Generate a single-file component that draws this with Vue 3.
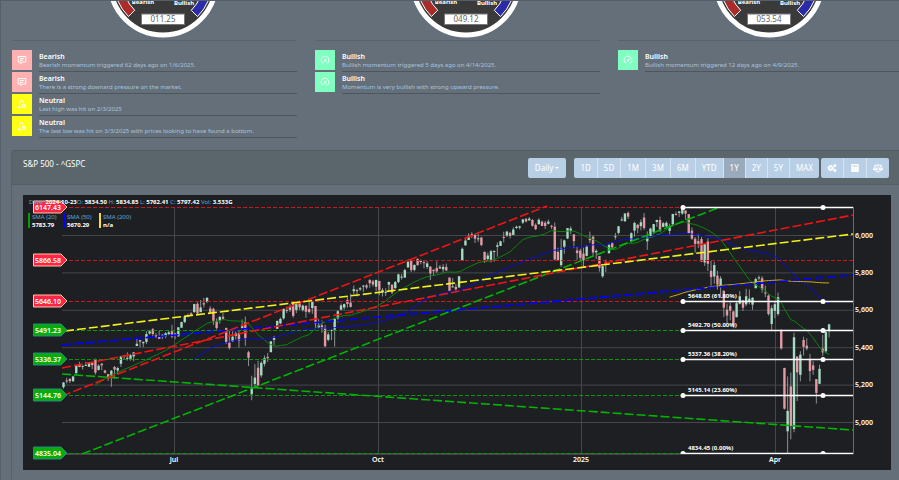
<script setup>
import { ref, computed } from 'vue';

const gauges = ref([
    {
        id: 1,
        valor: "011.25",
        signals: [
            { id: 1, tipo: "bearish", titulo: "Bearish", texto: "Bearish momentum triggered 62 days ago on 1/6/2025." },
            { id: 2, tipo: "bearish", titulo: "Bearish", texto: "There is a strong downard pressure on the market." },
            { id: 3, tipo: "neutral", titulo: "Neutral", texto: "Last high was hit on 2/3/2025" },
            { id: 4, tipo: "neutral", titulo: "Neutral", texto: "The last low was hit on 3/3/2025 with prices looking to have found a bottom." }
        ]
    },
    {
        id: 2,
        valor: "049.12",
        signals: [
            { id: 1, tipo: "bullish", titulo: "Bullish", texto: "Bullish momentum triggered 5 days ago on 4/14/2025." },
            { id: 2, tipo: "bullish", titulo: "Bullish", texto: "Momentum is very bullish with strong upward pressure." }
        ]
    },
    {
        id: 3,
        valor: "053.54",
        signals: [
            { id: 1, tipo: "bullish", titulo: "Bullish", texto: "Bullish momentum triggered 12 days ago on 4/9/2025." }
        ]
    }
]);

const ranges = ["1D", "5D", "1M", "3M", "6M", "YTD", "1Y", "2Y", "5Y", "MAX"];
const activeRange = ref("1Y");

// closes before the first visible bar, needed by the averages
const previous = [5100, 5116, 5036, 5018, 5064, 5128, 5181, 5188, 5188];

// open, high, low, close
const bars = [
    [5189,5216,5180,5214],[5225,5239,5209,5222],[5233,5237,5211,5221],[5221,5250,5217,5246],[5263,5311,5263,5308],
    [5310,5325,5296,5297],[5303,5305,5283,5303],[5305,5325,5302,5308],[5298,5324,5297,5321],[5319,5323,5286,5307],
    [5340,5341,5256,5267],[5281,5311,5278,5304],[5315,5315,5280,5306],[5278,5282,5262,5266],[5259,5260,5222,5235],
    [5243,5280,5191,5277],[5297,5302,5234,5283],[5278,5298,5257,5291],[5314,5354,5297,5354],[5357,5362,5335,5352],
    [5343,5375,5331,5346],[5341,5365,5331,5360],[5353,5375,5327,5375],[5409,5447,5409,5421],[5441,5441,5402,5433],
    [5424,5432,5403,5431],[5431,5488,5420,5473],[5476,5490,5471,5487],[5499,5505,5455,5473],[5466,5478,5452,5464],
    [5459,5490,5447,5447],[5460,5472,5446,5469],[5460,5483,5451,5477],[5473,5490,5467,5482],[5488,5523,5451,5460],
    [5471,5479,5446,5475],[5461,5509,5458,5509],[5507,5539,5507,5537],[5537,5570,5531,5567],[5572,5583,5562,5572],
    [5584,5590,5574,5576],[5591,5635,5586,5633],[5635,5642,5576,5584],[5590,5655,5590,5615],[5638,5666,5614,5631],
    [5644,5669,5639,5667],[5610,5622,5584,5588],[5608,5614,5522,5544],[5543,5557,5497,5505],[5544,5570,5529,5564],
    [5565,5585,5550,5555],[5505,5508,5419,5427],[5428,5491,5390,5399],[5433,5488,5430,5459],[5476,5487,5444,5463],
    [5478,5489,5401,5436],[5505,5551,5493,5522],[5537,5566,5410,5446],[5376,5383,5302,5346],[5151,5250,5119,5186],
    [5206,5312,5193,5240],[5293,5330,5195,5199],[5252,5328,5240,5319],[5314,5358,5300,5344],[5351,5371,5324,5344],
    [5376,5436,5376,5434],[5442,5463,5415,5455],[5501,5546,5501,5543],[5530,5561,5525,5554],[5557,5608,5550,5608],
    [5602,5620,5585,5597],[5603,5632,5591,5620],[5637,5643,5560,5570],[5602,5641,5585,5634],[5639,5651,5602,5616],
    [5602,5631,5593,5625],[5624,5627,5560,5592],[5607,5646,5583,5591],[5612,5651,5581,5648],[5623,5623,5504,5528],
    [5506,5552,5503,5520],[5520,5546,5480,5503],[5507,5522,5402,5408],[5442,5484,5434,5471],[5490,5497,5441,5495],
    [5496,5560,5406,5554],[5557,5600,5535,5595],[5603,5636,5601,5626],[5615,5636,5604,5633],[5655,5670,5614,5634],
    [5641,5689,5615,5618],[5702,5733,5686,5713],[5709,5715,5674,5702],[5711,5725,5704,5718],[5727,5735,5698,5732],
    [5733,5741,5712,5722],[5762,5767,5721,5745],[5755,5763,5727,5738],[5726,5765,5703,5762],[5757,5757,5681,5708],
    [5698,5719,5674,5709],[5698,5718,5677,5699],[5737,5753,5702,5751],[5737,5739,5686,5695],[5719,5757,5714,5751],
    [5751,5796,5745,5792],[5778,5795,5764,5780],[5775,5822,5775,5815],[5829,5871,5829,5859],[5866,5870,5804,5815],
    [5816,5846,5808,5842],[5875,5878,5840,5841],[5859,5872,5846,5864],[5857,5866,5824,5853],[5832,5863,5821,5851],
    [5834,5834,5762,5797],[5817,5817,5784,5809],[5826,5862,5799,5808],[5833,5842,5823,5823],[5819,5847,5802,5832],
    [5832,5850,5811,5813],[5775,5775,5702,5705],[5723,5772,5723,5728],[5725,5741,5696,5712],[5722,5783,5722,5782],
    [5864,5936,5864,5929],[5947,5983,5947,5973],[5976,6012,5976,5995],[6008,6017,5986,6001],[6003,6009,5960,5983],
    [5985,6008,5965,5985],[5989,5993,5942,5949],[5912,5915,5853,5870],[5874,5908,5865,5893],[5870,5923,5855,5916],
    [5914,5920,5860,5917],[5940,5963,5887,5948],[5944,5972,5944,5969],[5992,6020,5963,5987],[6000,6025,5992,6021],
    [6014,6020,5984,5998],[6003,6044,6003,6032],[6040,6053,6035,6047],[6042,6052,6033,6049],[6069,6089,6061,6086],
    [6089,6094,6070,6075],[6081,6099,6079,6090],[6083,6088,6048,6052],[6057,6065,6029,6034],[6060,6092,6060,6084],
    [6074,6079,6051,6051],[6068,6078,6035,6051],[6063,6085,6059,6074],[6052,6057,6035,6050],[6047,6070,5867,5872],
    [5912,5935,5866,5867],[5842,5982,5832,5930],[5940,5978,5902,5974],[5984,6040,5981,6040],[6024,6049,6007,6037],
    [6006,6006,5932,5970],[5920,5940,5869,5906],[5919,5929,5868,5881],[5903,5935,5829,5868],[5891,5949,5888,5942],
    [5982,6021,5960,5975],[5993,6000,5890,5909],[5910,5927,5874,5918],[5890,5890,5807,5827],[5782,5838,5773,5836],
    [5859,5871,5805,5842],[5905,5960,5905,5949],[5963,5964,5930,5937],[5995,6014,5978,5996],[6014,6051,6006,6049],
    [6081,6100,6076,6086],[6076,6118,6074,6118],[6121,6128,6088,6101],[5969,6017,5962,6012],[6026,6074,5994,6067],
    [6057,6062,6012,6039],[6050,6086,6027,6071],[6096,6120,6030,6040],[5969,6022,5923,5994],[5998,6042,5990,6037],
    [6020,6062,6007,6061],[6072,6084,6046,6083],[6083,6101,6019,6025],[6046,6073,6044,6066],[6049,6076,6042,6068],
    [6025,6063,6003,6051],[6060,6116,6050,6115],[6115,6127,6107,6114],[6121,6129,6099,6129],[6117,6147,6111,6144],
    [6134,6134,6084,6117],[6114,6114,6008,6013],[6026,6043,5977,5983],[5982,5992,5908,5955],[5970,6009,5932,5956],
    [5981,5993,5858,5861],[5856,5959,5837,5954],[5968,5986,5810,5849],[5811,5865,5732,5778],[5781,5860,5742,5842],
    [5785,5812,5711,5738],[5726,5783,5666,5770],[5705,5705,5564,5614],[5603,5636,5528,5572],[5624,5642,5546,5599],
    [5594,5597,5504,5521],[5563,5645,5563,5638],[5635,5703,5631,5675],[5654,5654,5597,5614],[5632,5715,5622,5675],
    [5646,5711,5632,5662],[5630,5670,5603,5667],[5718,5775,5718,5767],[5775,5786,5760,5776],[5771,5783,5694,5712],
    [5695,5732,5670,5693],[5679,5685,5572,5580],[5527,5627,5488,5611],[5597,5650,5558,5633],[5580,5695,5571,5670],
    [5492,5499,5390,5396],[5292,5292,5069,5074],[4953,5246,4835,5062],[5193,5267,4910,4982],[4965,5481,4948,5456],
    [5353,5353,5115,5268],[5255,5381,5220,5363],[5441,5459,5358,5405],[5411,5450,5386,5396],[5335,5367,5220,5275],
    [5305,5328,5255,5282],[5232,5232,5101,5158],[5207,5309,5207,5287],[5395,5469,5356,5375],[5381,5489,5371,5484],
    [5489,5528,5455,5525]
];

const xAt = (i) => 40.5 + i * 3.19;
const yAt = (price) => 40.5 + (6000 - price) * 0.187;

const candles = bars.map(([open, high, low, close], i) => ({
    id: i,
    x: xAt(i),
    high: yAt(high),
    low: yAt(low),
    top: yAt(Math.max(open, close)),
    height: Math.max(Math.abs(open - close) * 0.187, 1),
    up: close >= open
}));

const sma = (size) => {
    const closes = [...previous, ...bars.map((bar) => bar[3])];
    const points = [];
    for (let i = size - 1; i < closes.length; i++) {
        const sum = closes.slice(i - size + 1, i + 1).reduce((a, b) => a + b, 0);
        points.push(`${xAt(i - previous.length).toFixed(1)},${yAt(sum / size).toFixed(1)}`);
    }
    return points.join(" ");
};

const averages = computed(() => [
    { id: 20, nombre: "SMA (20)", valor: "5783.79", color: "#0a9a0a", line: "#0a860a", points: sma(20), x: 5 },
    { id: 50, nombre: "SMA (50)", valor: "5670.29", color: "#0000ff", line: "#0c0cd8", points: sma(50), x: 40 },
    { id: 200, nombre: "SMA (200)", valor: "n/a", color: "#f5e02a", line: "#d0a810", points: sma(200), x: 76 }
]);

const gridPrices = [6000, 5800, 5600, 5400, 5200, 5000];
const months = [
    { x: 151, label: "Jul" },
    { x: 355, label: "Oct" },
    { x: 558, label: "2025" },
    { x: 752, label: "Apr" }
];

const levels = [
    { price: "6147.43", y: 12, tipo: "resistance" },
    { price: "5866.58", y: 65, tipo: "resistance" },
    { price: "5646.10", y: 106, tipo: "resistance" },
    { price: "5491.23", y: 135, tipo: "support" },
    { price: "5336.37", y: 164, tipo: "support" },
    { price: "5144.76", y: 200, tipo: "support" },
    { price: "4835.04", y: 258, tipo: "support" }
];

const fibs = [
    { y: 12, label: "" },
    { y: 106, label: "5648.05 (61.80%)" },
    { y: 135, label: "5492.70 (50.00%)" },
    { y: 164, label: "5337.36 (38.20%)" },
    { y: 200, label: "5145.14 (23.60%)" },
    { y: 258, label: "4834.45 (0.00%)" }
];

const trends = [
    { color: "#0000ff", x1: 39, y1: 150, x2: 830, y2: 80 },
    { color: "#00b400", x1: 39, y1: 179, x2: 830, y2: 235 },
    { color: "#00b400", x1: 59, y1: 259, x2: 697, y2: 12 },
    { color: "#f01414", x1: 39, y1: 201, x2: 524, y2: 11 },
    { color: "#f01414", x1: 39, y1: 173, x2: 830, y2: 20 },
    { color: "#f5f514", x1: 42, y1: 136, x2: 830, y2: 39 }
];
</script>

<template>
    <main class="dashboard">
        <section class="overview">
            <article v-for="gauge in gauges" :key="gauge.id" class="column">
                <div class="gauge">
                    <svg width="112" height="38" viewBox="-56 19 112 38" role="img" :aria-label="'Momentum ' + gauge.valor">
                        <circle r="53" fill="#3a3a3b" stroke="#fff" stroke-width="5" />
                        <path d="M-34.5 34.5 A48.8 48.8 0 0 1 -48.8 0 L-40 0 A40 40 0 0 0 -28.3 28.3 Z" fill="#ab2a2a" stroke="#fff" stroke-width="1" />
                        <path d="M34.5 34.5 A48.8 48.8 0 0 0 48.8 0 L40 0 A40 40 0 0 1 28.3 28.3 Z" fill="#2b2baa" stroke="#fff" stroke-width="1" />
                        <text class="gauge-label" x="-20" y="22">Bearish</text>
                        <text class="gauge-label" x="21" y="23">Bullish</text>
                        <rect x="-21.5" y="32" width="43" height="10.5" fill="#fff" stroke="#777" />
                        <text class="gauge-value" x="0" y="40">{{ gauge.valor }}</text>
                    </svg>
                </div>
                <ul class="signals">
                    <li v-for="signal in gauge.signals" :key="signal.id" class="signal">
                        <span class="signal-icon" :class="signal.tipo">
                            <svg v-if="signal.tipo === 'bearish'" width="10" height="10" viewBox="0 0 10 10">
                                <path d="M1.2 1.5 H8.8 V7 H5.4 L4 8.6 V7 H1.2 Z M2.8 3.4 H7.2 M2.8 5.2 H6" />
                            </svg>
                            <svg v-else-if="signal.tipo === 'neutral'" width="10" height="10" viewBox="0 0 10 10">
                                <path d="M4.6 8.6 H0.8 C2.4 7.6 2.8 6.6 2.8 5 V3.2 A1.7 1.7 0 0 1 6.2 3.2 V4.2" />
                                <circle cx="7" cy="6.8" r="1.8" />
                                <path d="M7 5.8 V6.9 H7.8" />
                            </svg>
                            <svg v-else width="10" height="10" viewBox="0 0 10 10">
                                <path d="M2.6 8.2 A3.9 3.9 0 1 1 7.4 8.2 L6.6 7.4 M2.6 8.2 L3.4 7.4 M4.6 6 L6.6 3.6" />
                                <circle cx="4.8" cy="5.8" r="0.5" />
                            </svg>
                        </span>
                        <div class="signal-body">
                            <h4 class="signal-title">{{ signal.titulo }}</h4>
                            <p class="signal-text">{{ signal.texto }}</p>
                        </div>
                    </li>
                </ul>
            </article>
        </section>

        <section class="card" aria-labelledby="chart-title">
            <header class="card-header">
                <h3 id="chart-title" class="card-title">S&amp;P 500 - ^GSPC</h3>
                <div class="toolbar">
                    <button type="button" class="btn daily">Daily <span class="caret"></span></button>
                    <div class="btn-group">
                        <button
                            v-for="range in ranges"
                            :key="range"
                            type="button"
                            class="btn"
                            :class="{ active: range === activeRange }"
                            @click="activeRange = range"
                        >{{ range }}</button>
                    </div>
                    <div class="btn-group tools">
                        <button type="button" class="btn" aria-label="Settings">
                            <svg width="10" height="10" viewBox="0 0 10 10" fill="none" stroke="#fff">
                                <circle cx="3.6" cy="5" r="1.7" stroke-width="1.6" />
                                <circle cx="3.6" cy="5" r="2.8" stroke-width="1" stroke-dasharray="1.1 1.1" />
                                <circle cx="7.8" cy="2.6" r="1" stroke-width="1.2" />
                                <circle cx="7.8" cy="7.4" r="1" stroke-width="1.2" />
                            </svg>
                        </button>
                        <button type="button" class="btn" aria-label="Calculator">
                            <svg width="10" height="10" viewBox="0 0 10 10">
                                <rect x="1.2" y="1" width="7.6" height="8" rx="0.6" fill="#fff" />
                                <path d="M2.2 3 H7.8" stroke="#b9cfe6" stroke-width="1" />
                                <path d="M2.4 5.2 H7.6 M2.4 7.2 H7.6" stroke="#dfe8f3" stroke-width="0.8" stroke-dasharray="1 1" />
                            </svg>
                        </button>
                        <button type="button" class="btn" aria-label="Compare">
                            <svg width="10" height="10" viewBox="0 0 10 10" fill="none" stroke="#fff" stroke-width="0.8">
                                <path d="M5 0.8 V8.6 M2.6 8.8 H7.4 M1.6 2.2 H8.4 M2 2.2 L0.4 6 H3.8 Z M8 2.2 L6.2 6 H9.6 Z" />
                                <path d="M0.4 6 A1.7 1.3 0 0 0 3.8 6 Z M6.2 6 A1.7 1.3 0 0 0 9.6 6 Z" fill="#fff" />
                            </svg>
                        </button>
                    </div>
                </div>
            </header>

            <div class="card-body">
                <svg class="chart" viewBox="0 0 868 275" role="img" aria-label="S&P 500 daily chart">
                    <defs>
                        <clipPath id="plot">
                            <rect x="39" y="10" width="792" height="249" />
                        </clipPath>
                    </defs>

                    <!-- grid -->
                    <g class="grid">
                        <line v-for="price in gridPrices" :key="price" x1="39" x2="830" :y1="yAt(price)" :y2="yAt(price)" />
                        <line v-for="month in months" :key="month.label" :x1="month.x + 0.5" :x2="month.x + 0.5" y1="12" y2="258" />
                        <path class="axis" d="M39 259 H830.5 V12" />
                    </g>

                    <!-- candles -->
                    <g v-for="candle in candles" :key="candle.id">
                        <line :x1="candle.x" :x2="candle.x" :y1="candle.high" :y2="candle.low" class="wick" />
                        <rect :x="candle.x - 1.2" :y="candle.top" width="2.4" :height="candle.height" :class="candle.up ? 'up' : 'down'" />
                    </g>

                    <polyline v-for="item in averages" :key="item.id" :points="item.points" :stroke="item.line" class="average" />

                    <!-- levels -->
                    <line
                        v-for="level in levels"
                        :key="level.price"
                        x1="40"
                        x2="830"
                        :y1="level.y + 0.5"
                        :y2="level.y + 0.5"
                        :stroke="level.tipo === 'resistance' ? '#d0141e' : '#0a960a'"
                        class="level-line"
                    />

                    <g clip-path="url(#plot)">
                        <line
                            v-for="(trend, index) in trends"
                            :key="index"
                            :x1="trend.x1"
                            :y1="trend.y1"
                            :x2="trend.x2"
                            :y2="trend.y2"
                            :stroke="trend.color"
                            class="trend"
                        />
                        <g v-for="fib in fibs" :key="fib.y">
                            <line x1="660" x2="830" :y1="fib.y + 0.5" :y2="fib.y + 0.5" class="fib-line" />
                            <circle cx="660" :cy="fib.y + 0.5" r="2.5" fill="#fff" />
                            <circle cx="800" :cy="fib.y + 0.5" r="2.5" fill="#fff" />
                            <text x="665" :y="fib.y - 3" class="fib-label">{{ fib.label }}</text>
                        </g>
                    </g>

                    <g v-for="level in levels" :key="level.price">
                        <path
                            :d="`M10.5 ${level.y - 6} H38 L44 ${level.y} L38 ${level.y + 6} H10.5 Z`"
                            class="level-tag"
                            :class="level.tipo"
                        />
                        <text x="12" :y="level.y + 3" class="level-text">{{ level.price }}</text>
                    </g>

                    <!-- quote and legend -->
                    <text x="6" y="9" class="quote">
                        <tspan class="key">Date: </tspan>2024-10-23<tspan class="key">O: </tspan>5834.50
                        <tspan class="key">H: </tspan>5834.85
                        <tspan class="key">L: </tspan>5762.41
                        <tspan class="key">C: </tspan>5797.42
                        <tspan class="key">Vol: </tspan>3.533G
                    </text>
                    <g v-for="item in averages" :key="item.nombre">
                        <rect :x="item.x" y="18" width="2" height="15" :fill="item.color" />
                        <text :x="item.x + 4" y="24" class="legend-name">{{ item.nombre }}</text>
                        <text :x="item.x + 4" y="32" class="legend-value">{{ item.valor }}</text>
                    </g>

                    <!-- axes -->
                    <text v-for="price in gridPrices" :key="price" x="832" :y="yAt(price) + 2" class="axis-label">{{ price.toLocaleString("en-US") }}</text>
                    <text v-for="month in months" :key="month.label" :x="month.x" y="267" class="axis-label middle">{{ month.label }}</text>
                </svg>
            </div>
        </section>
    </main>
</template>

<style>
body {
    background-color: #646f7a;
    overflow: hidden;
}
</style>

<style scoped>
.dashboard {
    box-sizing: border-box;
    min-height: 100vh;
    border-top: 1px solid #53606a;
    border-left: 1px solid #53606a;
    font-family: "Noto Sans", "Open Sans", sans-serif;
    color: white;
    background-color: #646f7a;
}

/* --- GAUGES AND SIGNALS --- */
.overview {
    display: grid;
    grid-template-columns: repeat(3, 1fr);
    column-gap: 18px;
    margin: 0 -4px 0 11px;
}

.gauge {
    display: flex;
    justify-content: center;
    padding-left: 16px;
    height: 39px;
    border-bottom: 1px solid #58636d;
}

.gauge-label {
    font-size: 6px;
    font-weight: bold;
    fill: white;
    text-anchor: middle;
}

.gauge-value {
    font-size: 8px;
    fill: #666;
    text-anchor: middle;
}

.signals {
    margin: 0;
    padding: 9px 0 0;
    list-style: none;
}

.signal {
    display: flex;
    gap: 7px;
    height: 22px;
}

.signal-icon {
    display: flex;
    align-items: center;
    justify-content: center;
    width: 20px;
    height: 20px;
}

.signal-icon path,
.signal-icon circle {
    fill: none;
    stroke: white;
    stroke-width: 1;
}

.bearish {
    background-color: #ffb0b0;
}

.neutral {
    background-color: #ffff14;
}

.bullish {
    background-color: #80ffc0;
}

.signal-body {
    flex: 1;
    box-sizing: border-box;
    padding-top: 3px;
    border-bottom: 1px solid #4b5660;
}

.signal-title {
    margin: 0;
    font-size: 7px;
    line-height: 8px;
    font-weight: 600;
}

.signal-text {
    margin: 0;
    font-size: 6px;
    line-height: 8px;
    color: #a9c4dc;
}

/* --- CHART CARD --- */
.card {
    margin: 12px 0 0 10px;
    border-top: 1px solid #505b61;
    border-left: 1px solid #566168;
    border-top-left-radius: 4px;
}

.card-header {
    display: flex;
    align-items: center;
    justify-content: space-between;
    height: 33px;
    padding: 0 10px 0 11px;
    background-color: #5a666b;
    border-bottom: 1px solid #535f66;
    border-top-left-radius: 4px;
}

.card-title {
    margin: 0 0 8px;
    font-size: 8px;
    font-weight: normal;
}

.toolbar {
    display: flex;
}

.btn {
    display: flex;
    align-items: center;
    justify-content: center;
    height: 20px;
    padding: 0 6px;
    border: 0;
    font-family: inherit;
    font-size: 8px;
    color: white;
    background-color: #b9cfe6;
}

.daily {
    gap: 2px;
    margin-right: 8px;
    padding: 0 7px;
    border-radius: 2px;
}

.caret {
    border: 2px solid transparent;
    border-top-color: white;
    border-bottom: 0;
}

.btn-group {
    display: flex;
    border-radius: 2px;
    overflow: hidden;
}

.btn-group .btn + .btn {
    border-left: 1px solid #d6e3f1;
}

.btn-group .active {
    background-color: #98aabb;
}

.tools {
    margin-left: 2px;
}

.card-body {
    padding: 10px 8px 9px 11px;
}

.chart {
    display: block;
    width: 100%;
    background-color: #1e1f23;
}

.grid line,
.grid path {
    fill: none;
    stroke: #45474b;
    stroke-width: 1;
}

.grid .axis {
    stroke: #6a6c70;
}

.wick {
    stroke: #a8acae;
    stroke-width: 0.8;
}

.up {
    fill: #a3dcc0;
}

.down {
    fill: #e29aa4;
}

.average {
    fill: none;
    stroke-width: 1;
}

.trend {
    stroke-width: 1.6;
    stroke-dasharray: 9 3;
}

.level-line {
    stroke-width: 1;
    stroke-dasharray: 4 2;
}

.level-tag {
    stroke-width: 1;
}

.level-tag.resistance {
    fill: #ff2448;
    stroke: #ffc9a0;
}

.level-tag.support {
    fill: #06ac0c;
    stroke: #2a8a80;
}

.level-text {
    font-size: 7px;
    font-weight: 600;
    fill: white;
}

.fib-line {
    stroke: white;
    stroke-width: 1.4;
}

.fib-label {
    font-size: 6px;
    font-weight: bold;
    fill: white;
}

.quote {
    font-size: 6px;
    font-weight: bold;
    fill: white;
}

.key {
    font-weight: normal;
    fill: #5fa8d8;
}

.legend-name {
    font-size: 6px;
    fill: #5fa8d8;
}

.legend-value {
    font-size: 6px;
    font-weight: bold;
    fill: white;
}

.axis-label {
    font-size: 7px;
    font-weight: 600;
    fill: white;
}

.middle {
    text-anchor: middle;
}
</style>
